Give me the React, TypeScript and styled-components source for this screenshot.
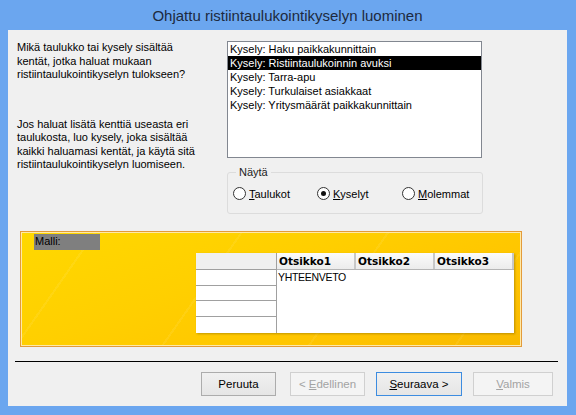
import styled, { createGlobalStyle } from "styled-components"

const Global = createGlobalStyle`
html, body {
  margin: 0;
  padding: 0;
}
body {
  width: 576px;
  height: 415px;
  overflow: hidden;
  font-family: "Liberation Sans", Arial, sans-serif;
}
`

const Window = styled.div`
width: 576px;
height: 415px;
box-sizing: border-box;
background: #6ba6ef;
padding: 0 9px 9px 8px;
display: flex;
flex-direction: column;
`

const TitleBar = styled.div`
height: 30px;
display: flex;
align-items: center;
justify-content: center;
color: #1d2a40;
font-size: 15px;
padding-top: 1px;
box-sizing: border-box;
`

const Client = styled.div`
flex: 1;
background: #f0f0f0;
display: flex;
flex-direction: column;
font-size: 11px;
color: #000;
`

const Top = styled.div`
display: flex;
margin-top: 11px;
`

const LeftText = styled.div`
width: 219px;
box-sizing: border-box;
padding-left: 9px;
display: flex;
flex-direction: column;
gap: 36px;
line-height: 13.5px;
`

const RightCol = styled.div`
width: 255px;
display: flex;
flex-direction: column;
`

const ListBox = styled.div`
height: 117px;
box-sizing: border-box;
border: 1px solid #828790;
background: #fff;
`

const ListItem = styled.div<{ $selected?: boolean }>`
height: 14px;
line-height: 14px;
padding-left: 2px;
background: ${p => (p.$selected ? "#000" : "transparent")};
color: ${p => (p.$selected ? "#fff" : "#000")};
white-space: nowrap;
`

const Group = styled.fieldset`
margin: 8px 0 0 0;
padding: 8px 0 0 5px;
height: 48px;
box-sizing: border-box;
border: 1px solid #dcdcdc;
border-radius: 3px;
`

const Legend = styled.legend`
padding: 0 3px;
margin-left: 3px;
font-size: 11px;
line-height: 13px;
color: #222;
`

const RadioRow = styled.div`
display: flex;
align-items: center;
height: 13px;
`

const RadioLabel = styled.label<{ $width: number }>`
width: ${p => p.$width}px;
display: flex;
align-items: center;
gap: 3px;
`

const Circle = styled.span<{ $checked?: boolean }>`
width: 11px;
height: 11px;
border: 1px solid #333;
border-radius: 50%;
background: #fff;
display: flex;
align-items: center;
justify-content: center;
&::after {
  content: "";
  display: ${p => (p.$checked ? "block" : "none")};
  width: 5px;
  height: 5px;
  border-radius: 50%;
  background: #111;
}
`

const U = styled.span`
text-decoration: underline;
`

const Sample = styled.div`
margin: 17px 45px 0 12px;
height: 116px;
box-sizing: border-box;
border: 1px solid #e39b3a;
box-shadow: inset 0 0 0 1px #ffe9a8;
background:
  repeating-linear-gradient(125deg, transparent 0 60px, rgba(255,255,255,0.07) 60px 62px, transparent 62px 120px),
  linear-gradient(160deg, #ffd800 0%, #ffcf00 40%, #ffc400 75%, #f8b900 100%);
display: flex;
flex-direction: column;
`

const MalliLabel = styled.div`
margin: 2px 0 0 13px;
width: 66px;
height: 16px;
line-height: 14px;
background: #7f7f7f;
color: #000;
padding-left: 1px;
box-sizing: border-box;
`

const Grid = styled.div`
margin: 3px 7px 0 175px;
height: 80px;
display: flex;
background: #fff;
box-shadow: 1px 1px 2px rgba(120, 90, 0, 0.45);
`

const RowHeaders = styled.div`
width: 80px;
display: flex;
flex-direction: column;
border-right: 1px solid #a0a0a0;
`

const Corner = styled.div`
height: 17px;
background: #f0f0f0;
border-bottom: 1px solid #a0a0a0;
box-sizing: border-box;
`

const RowCell = styled.div<{ $last?: boolean }>`
height: 16px;
border-bottom: ${p => (p.$last ? "none" : "1px solid #a0a0a0")};
box-sizing: border-box;
`

const Columns = styled.div`
flex: 1;
display: flex;
flex-direction: column;
`

const HeaderRow = styled.div`
height: 17px;
display: flex;
background: linear-gradient(#fbfbfb, #ececec);
border-bottom: 1px solid #b5b5b5;
box-sizing: border-box;
`

const HeaderCell = styled.div`
flex: 1;
padding-left: 2px;
font-family: "DejaVu Sans", Verdana, sans-serif;
font-weight: bold;
font-size: 10.5px;
line-height: 16px;
border-right: 2px solid #c8c8c8;
`

const Cell = styled.div`
padding: 1px 0 0 1px;
font-size: 10.5px;
letter-spacing: -0.3px;
`

const Separator = styled.div`
margin: 14px 9px 0 7px;
height: 1px;
background: #000;
`

const Buttons = styled.div`
display: flex;
justify-content: flex-end;
margin: 10px 14px 0 0;
`

const Button = styled.button<{ $width: number; $gap: number; $default?: boolean }>`
width: ${p => p.$width}px;
height: 24px;
margin-left: ${p => p.$gap}px;
font-family: "Liberation Sans", Arial, sans-serif;
font-size: 11.5px;
color: #000;
border: 1px solid ${p => (p.$default ? "#3c8ce0" : "#acacac")};
background: linear-gradient(#f0f0f0, #e5e5e5);
padding: 0;
&:disabled {
  color: #a3a3a3;
  border-color: #d0d0d0;
  background: #f4f4f4;
}
`

const items = [
  "Kysely: Haku paikkakunnittain",
  "Kysely: Ristiintaulukoinnin avuksi",
  "Kysely: Tarra-apu",
  "Kysely: Turkulaiset asiakkaat",
  "Kysely: Yritysmäärät paikkakunnittain",
]

export default function App() {
  return (
    <>
      <Global />
      <Window>
        <TitleBar>Ohjattu ristiintaulukointikyselyn luominen</TitleBar>
        <Client>
          <Top>
            <LeftText>
              <div>
                Mikä taulukko tai kysely sisältää<br />
                kentät, jotka haluat mukaan<br />
                ristiintaulukointikyselyn tulokseen?
              </div>
              <div>
                Jos haluat lisätä kenttiä useasta eri<br />
                taulukosta, luo kysely, joka sisältää<br />
                kaikki haluamasi kentät, ja käytä sitä<br />
                ristiintaulukointikyselyn luomiseen.
              </div>
            </LeftText>
            <RightCol>
              <ListBox>
                {items.map((it, i) => (
                  <ListItem key={it} $selected={i === 1}>{it}</ListItem>
                ))}
              </ListBox>
              <Group>
                <Legend>Näytä</Legend>
                <RadioRow>
                  <RadioLabel $width={84}>
                    <Circle />
                    <span><U>T</U>aulukot</span>
                  </RadioLabel>
                  <RadioLabel $width={85}>
                    <Circle $checked />
                    <span><U>K</U>yselyt</span>
                  </RadioLabel>
                  <RadioLabel $width={80}>
                    <Circle />
                    <span><U>M</U>olemmat</span>
                  </RadioLabel>
                </RadioRow>
              </Group>
            </RightCol>
          </Top>
          <Sample>
            <MalliLabel>Malli:</MalliLabel>
            <Grid>
              <RowHeaders>
                <Corner />
                <RowCell />
                <RowCell />
                <RowCell />
                <RowCell $last />
              </RowHeaders>
              <Columns>
                <HeaderRow>
                  <HeaderCell>Otsikko1</HeaderCell>
                  <HeaderCell>Otsikko2</HeaderCell>
                  <HeaderCell>Otsikko3</HeaderCell>
                </HeaderRow>
                <Cell>YHTEENVETO</Cell>
              </Columns>
            </Grid>
          </Sample>
          <Separator />
          <Buttons>
            <Button $width={75} $gap={0}>Peruuta</Button>
            <Button $width={75} $gap={14} disabled>&lt; <U>E</U>dellinen</Button>
            <Button $width={86} $gap={11} $default><U>S</U>euraava &gt;</Button>
            <Button $width={80} $gap={11} disabled><U>V</U>almis</Button>
          </Buttons>
        </Client>
      </Window>
    </>
  )
}
